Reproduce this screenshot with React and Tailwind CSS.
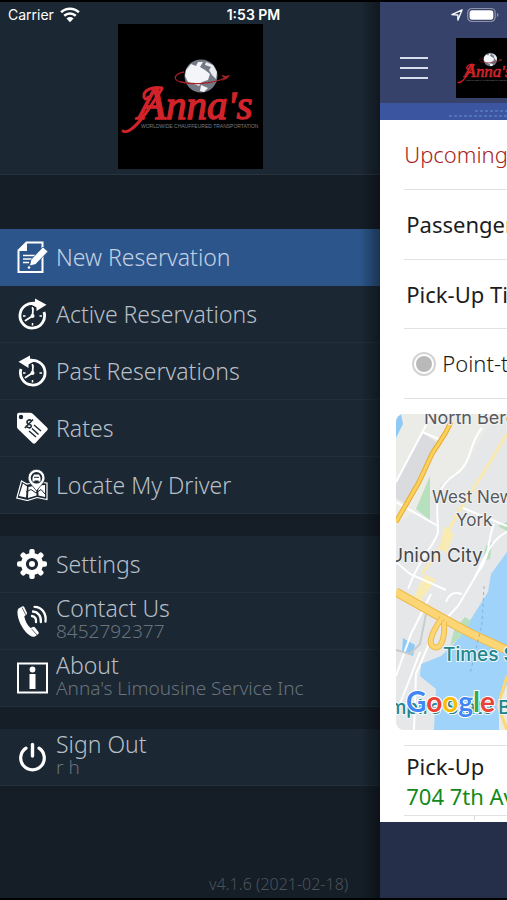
import React from "react";

function NewReservationIcon() {
  return (
    <svg viewBox="0 0 32 32" className="size-8 shrink-0" aria-hidden="true">
      <path d="M10.5 1.5H26.5V31H2.500V9.500Z" fill="none" stroke="#fff" strokeWidth="2" />
      <path d="M2 10L11 1V10Z" fill="#fff" />
      <path d="M7 14.500H19M7 18H16M7 21.500H13" stroke="#fff" strokeWidth="1.500" />
      <path d="M27 6L32 10.500L19.500 23.500L13.500 25L15 18.500Z" fill="#fff" stroke="#2c568b" strokeWidth="0.800" />
      <circle cx="13" cy="26.500" r="1.300" fill="#fff" />
    </svg>
  );
}

function ClockFace() {
  return (
    <>
      <path d="M16.500 9V11.500M16.500 25V27.500M7 18H9.500M23.500 18H26" stroke="#fff" strokeWidth="1.500" />
      <path d="M17 11L16.500 18L9.500 22.500" fill="none" stroke="#fff" strokeWidth="1.800" strokeLinecap="round" />
      <circle cx="16.500" cy="18" r="2" fill="#fff" />
    </>
  );
}

function ActiveIcon() {
  return (
    <svg viewBox="0 0 32 32" className="size-8 shrink-0" aria-hidden="true">
      <path d="M20 6A12.300 12.300 0 1 0 28 14" fill="none" stroke="#fff" strokeWidth="2.800" />
      <path d="M11 6.500C14 4.200 16.500 3.800 19 3.800V0.500L30.500 6.800L20.500 13V9.500C17 7 14 6.500 11 6.500Z" fill="#fff" />
      <ClockFace />
    </svg>
  );
}

function PastIcon() {
  return (
    <svg viewBox="0 0 32 32" className="size-8 shrink-0" aria-hidden="true">
      <path d="M13 6A12.300 12.300 0 1 1 5 14" fill="none" stroke="#fff" strokeWidth="2.800" />
      <path d="M22 6.500C19 4.200 16.500 3.800 14 3.800V0.500L2.500 6.800L12.500 13V9.500C16 7 19 6.500 22 6.500Z" fill="#fff" />
      <ClockFace />
    </svg>
  );
}

function RatesIcon() {
  return (
    <svg viewBox="0 0 32 32" className="size-8 shrink-0" aria-hidden="true">
      <path d="M3 0.800H14Q15.500 0.800 17 2L31 15.500Q32.500 17 31 18.500L19.500 31Q18 32.500 16.500 31L2 17Q1 16 1 14.500V3Q1 0.800 3 0.800Z" fill="#fff" />
      <circle cx="5" cy="5" r="2.200" fill="#1b2733" />
      <path d="M15.500 9C13 6.500 10 9 11.500 11.500C13 13 15 12 15.300 14C15 17 11 16 10 13.500M17 7.500L8.800 16" fill="none" stroke="#1b2733" strokeWidth="1.600" />
      <path d="M18 13L25 19M16 16.500L22.500 22.500M13 19L20 25" stroke="#1b2733" strokeWidth="1.400" />
    </svg>
  );
}

function LocateIcon() {
  return (
    <svg viewBox="0 0 32 32" className="size-8 shrink-0" aria-hidden="true">
      <path d="M5.500 12L11 15L20 13L31 14V30.500L21 28.500L11.500 31.500L0.800 29Z" fill="none" stroke="#fff" strokeWidth="1.200" />
      <path d="M7 14.500L11 17.500L10 28.500L3 27Z" fill="#fff" />
      <path d="M12.500 18L20 16.500L20.500 26.500L12 29Z" fill="#fff" />
      <path d="M22 16.500L29 16V28L22.500 26.500Z" fill="#fff" />
      <path d="M10 23L15 20.500L20 24L25 20.500L29 25" fill="none" stroke="#1b2733" strokeWidth="1" />
      <path d="M20.500 22C18 18 12 14 12 8.800A8.500 8.500 0 0 1 29 8.800C29 14 23 18 20.500 22Z" fill="#fff" stroke="#1b2733" strokeWidth="0.800" />
      <circle cx="20.500" cy="8.800" r="5.800" fill="#1b2733" />
      <path d="M16.500 12.500V8.500L18 5.500H23L24.500 8.500V12.500H22.500V11.500H18.500V12.500Z" fill="#fff" />
      <path d="M18 8.300H23" stroke="#1b2733" strokeWidth="1" />
    </svg>
  );
}

const TEETH = [0, 45, 90, 135, 180, 225, 270, 315];

function SettingsIcon() {
  return (
    <svg viewBox="0 0 32 32" className="size-8 shrink-0" aria-hidden="true">
      {TEETH.map((angle) => (
        <rect key={angle} x="13.300" y="1" width="5.400" height="8" rx="2" fill="#fff" transform={`rotate(${angle} 16 16)`} />
      ))}
      <circle cx="16" cy="16" r="8.600" fill="none" stroke="#fff" strokeWidth="5" />
      <circle cx="16" cy="16" r="3" fill="#fff" />
    </svg>
  );
}

function PhoneIcon() {
  return (
    <svg viewBox="0 0 32 32" className="size-8 shrink-0" aria-hidden="true">
      <path d="M2.500 3.500L6.500 1.200Q8 1 8.500 2.500L11 8Q11.200 9.300 10 10L8.300 11.200C9 16 11.500 20.500 14.500 23L17 22Q18 21.500 19 22.500L22.500 27Q23.200 28.300 22 29.300L19 31.500C14 33 8 26 4.500 19C1.500 12.500 0.500 6 2.500 3.500Z" fill="#fff" />
      <path d="M6 2.500L9.800 9.800M15.500 23.800L21 30" stroke="#1b2733" strokeWidth="0.700" />
      <path d="M16 11C18.500 11.500 20.500 13.500 20 17M17 6.500C22 7 25.500 11 24.800 17M18.500 1.800C26 2 30.500 8.500 29.500 16.500" fill="none" stroke="#fff" strokeWidth="2.300" strokeLinecap="round" />
    </svg>
  );
}

function AboutIcon() {
  return (
    <svg viewBox="0 0 32 32" className="size-8 shrink-0" aria-hidden="true">
      <rect x="2" y="1.500" width="29" height="29" fill="none" stroke="#fff" strokeWidth="2" />
      <circle cx="16.500" cy="7.500" r="2.900" fill="#fff" />
      <path d="M13.500 12H19.500V27H13.500Z" fill="#fff" />
    </svg>
  );
}

function PowerIcon() {
  return (
    <svg viewBox="0 0 32 32" className="size-8 shrink-0" aria-hidden="true">
      <path d="M10 7.200A11.800 11.800 0 1 0 23 7.200" fill="none" stroke="#fff" strokeWidth="3.200" strokeLinecap="round" />
      <path d="M16.500 3.500V15" stroke="#fff" strokeWidth="3.400" strokeLinecap="round" />
    </svg>
  );
}

function AnnasLogo({ className }) {
  return (
    <svg viewBox="0 0 145 145" className={className} role="img" aria-label="Anna's">
      <rect width="145" height="145" fill="#000" />
      <circle cx="83" cy="52" r="16.500" fill="#747986" />
      <path d="M68 46L73 40L78 42L80 38L85 38L82 43L87 46L92 50L90 56L84 58L81 62L76 60L70 58L67 52Z" fill="#f4f5f8" />
      <path d="M88 38L95 41L99 48L98 55L94 51L91 46L93 43L87 41Z" fill="#e9ebf0" />
      <path d="M83 61L90 64L86 68L82 67Z" fill="#f4f5f8" />
      <path d="M66 48C56 50 54 56 63 58C75 61 94 60 107 54" fill="none" stroke="#a52024" strokeWidth="1.300" />
      <path d="M103 51L108 52L112 51L110 54L104 57L106 54Z" fill="#a52024" />
      <text x="20" y="95" fill="#d2232a" stroke="#d2232a" strokeWidth="1.400" fontFamily="'Liberation Serif', serif" fontStyle="italic" fontSize="41">
        <tspan fontSize="46">A</tspan>nna's
      </text>
      <path d="M44 64C35 62 25 66 26 73C27 76 30 75 30 73M44 65C34 80 22 100 12 106C9 108 6 108 5 107" fill="none" stroke="#d2232a" strokeWidth="3" strokeLinecap="round" />
      <text x="23" y="104" fill="#777a80" fontFamily="'Liberation Sans', sans-serif" fontSize="5">
        WORLDWIDE CHAUFFEURED TRANSPORTATION
      </text>
    </svg>
  );
}

function StatusBar() {
  return (
    <div className="pointer-events-none absolute inset-x-0 top-0 z-20 grid h-7 grid-cols-3 items-center border-t-2 border-black px-2 font-['Inter','Liberation_Sans',sans-serif] text-sm text-white">
      <div className="flex items-center gap-1.5">
        <span>Carrier</span>
        <svg viewBox="0 0 18 14" className="h-4 w-5" aria-label="Wi-Fi">
          <path d="M1 4.500C5.500 0.300 12.500 0.300 17 4.500M3.800 7.700C6.800 4.900 11.200 4.900 14.200 7.700" fill="none" stroke="#fff" strokeWidth="2.300" />
          <path d="M9 13.500L5.800 10.200Q9 7.600 12.200 10.200Z" fill="#fff" />
        </svg>
      </div>
      <span className="text-center font-semibold">1:53 PM</span>
      <div className="flex items-center justify-end gap-1">
        <svg viewBox="0 0 14 14" className="size-3" aria-label="Location">
          <path d="M1 6.500L13 1L8 13V7Z" fill="none" stroke="#fff" strokeWidth="1.500" strokeLinejoin="round" />
        </svg>
        <svg viewBox="0 0 31 14" className="h-4 w-8" aria-label="Battery">
          <rect x="0.700" y="0.700" width="26.600" height="12.600" rx="4" fill="none" stroke="#8d93a8" strokeWidth="1.200" />
          <rect x="2.500" y="2.500" width="23" height="9" rx="2.500" fill="#fff" />
          <path d="M29 5V9Q30.500 8.500 30.500 7T29 5Z" fill="#8d93a8" />
        </svg>
      </div>
    </div>
  );
}

function MenuItem({ icon: Icon, title, detail, active }) {
  return (
    <li>
      <button
        type="button"
        className={`flex h-[57px] w-full items-center gap-2 border-b pl-4 text-left ${
          active ? "border-[#2c568b] bg-[#2c568b] text-[#c3d1e3]" : "border-[#22303b] bg-[#1b2733] text-[#b7bfc7]"
        }`}
      >
        <Icon />
        <span className={`flex flex-col whitespace-nowrap text-[23px] leading-6 font-light ${detail ? "pb-1" : ""}`}>
          <span>{title}</span>
          {detail && <span className="text-[19px] leading-[22px] text-[#67727c]">{detail}</span>}
        </span>
      </button>
    </li>
  );
}

function Sidebar() {
  return (
    <aside className="relative flex w-3/4 shrink-0 flex-col bg-[#151e27]">
      <div className="flex h-[175px] shrink-0 justify-center border-b border-[#26343f] bg-[#1b2733] pt-6">
        <AnnasLogo className="size-[145px]" />
      </div>
      <nav className="flex flex-col gap-[22px] pt-[54px]">
        <ul>
          <MenuItem icon={NewReservationIcon} title="New Reservation" active />
          <MenuItem icon={ActiveIcon} title="Active Reservations" />
          <MenuItem icon={PastIcon} title="Past Reservations" />
          <MenuItem icon={RatesIcon} title="Rates" />
          <MenuItem icon={LocateIcon} title="Locate My Driver" />
        </ul>
        <ul>
          <MenuItem icon={SettingsIcon} title="Settings" />
          <MenuItem icon={PhoneIcon} title="Contact Us" detail="8452792377" />
          <MenuItem icon={AboutIcon} title="About" detail="Anna's Limousine Service Inc" />
        </ul>
        <ul>
          <MenuItem icon={PowerIcon} title="Sign Out" detail="r h" />
        </ul>
      </nav>
      <p className="mt-auto pr-8 pb-0.5 text-right text-base leading-6 font-light text-[#4a535c]">v4.1.6 (2021-02-18)</p>
      <div className="pointer-events-none absolute inset-y-0 right-0 w-5 bg-linear-to-r from-transparent to-black/40" />
    </aside>
  );
}

function RouteMap() {
  return (
    <svg
      viewBox="0 0 111 316"
      preserveAspectRatio="xMinYMin slice"
      className="ml-4 h-[316px] rounded-l-lg font-['Inter','Liberation_Sans',sans-serif]"
      role="img"
      aria-label="Map"
    >
      <rect width="111" height="316" fill="#e6e7e8" />
      <path d="M0 0H100L70 50L45 70L30 90L0 110Z" fill="#ebebe8" />
      <path d="M26 18L43 30L12 92L0 84V70Z" fill="#d9dbde" />
      <path d="M0 0H5L7 10L0 24Z" fill="#8fcaf6" />
      <path d="M34 62L34 106L20 95Z" fill="#b7e0bd" />
      <path d="M111 138L95 160L92 178L75 205L58 230L45 242L25 250L24 262L40 275L38 316H104L111 270Z" fill="#9fd3fa" />
      <path d="M111 270L103 290V316H111Z" fill="#eeeae0" />
      <path d="M7 224L19 231L17 242L6 238Z" fill="#8fcaf6" />
      <path d="M69 203L58 216L54 232L64 224L75 207Z" fill="#b7dfbe" />
      <path d="M90 132L96 128L94 145L86 148Z" fill="#b7dfbe" />
      <path d="M111 108L102 112L111 117Z" fill="#b7dfbe" />
      <path d="M48 112L58 120L50 140L44 132ZM29 160L40 166L22 190L18 182Z" fill="#f9ebb4" />
      <g fill="none" stroke="#fff" strokeWidth="2">
        <path d="M36 0L0 68M26 18L45 26M0 88L42 112M86 14C72 30 77 48 60 60C35 76 42 96 42 118C40 130 25 140 12 175" />
        <path d="M67 94L111 112M98 110C90 130 96 140 81 160L62 192L38 218L20 260L18 316" />
        <path d="M111 118C95 125 88 145 78 165M0 148L14 160L50 176M35 180L15 220L0 262" />
        <path d="M50 188Q54 176 66 180M24 238Q8 280 0 300" />
      </g>
      <path d="M111 20L88 58L61 100L44 134L26 160" fill="none" stroke="#faeab0" strokeWidth="3" />
      <path d="M0 236L14 240L24 230L30 200" fill="none" stroke="#c9cccf" strokeWidth="2" />
      <path d="M55 8C48 24 43 28 36 40L23 68L0 108" fill="none" stroke="#e5ad32" strokeWidth="5" />
      <path d="M55 8C48 24 43 28 36 40L23 68L0 108" fill="none" stroke="#fbd05d" strokeWidth="3" />
      <path d="M0 178L48 205L76 220L111 236" fill="none" stroke="#edbb4b" strokeWidth="9" />
      <path d="M0 178L48 205L76 220L111 236" fill="none" stroke="#fcd675" strokeWidth="7" />
      <path d="M46 204C36 218 31 230 38 233C46 236 49 222 48 208" fill="none" stroke="#edbb4b" strokeWidth="6" />
      <path d="M46 204C36 218 31 230 38 233C46 236 49 222 48 208" fill="none" stroke="#fcd675" strokeWidth="4" />
      <path d="M111 262L102 292L111 316" fill="none" stroke="#fbd876" strokeWidth="3" />
      <path d="M88 172L86 210L74 260" fill="none" stroke="#7fa9ca" strokeWidth="0.800" strokeDasharray="3 3" />
      <g fill="#57595c" stroke="#f2f2f2" strokeWidth="2" paintOrder="stroke" fontSize="18">
        <text x="28" y="10">North Bergen</text>
        <text x="36" y="89" fontSize="17">West New</text>
        <text x="60" y="112" fontSize="17">York</text>
        <text x="-7" y="148" fontSize="19" fill="#46484b">Union City</text>
      </g>
      <g fill="#23848a" stroke="#eef7fb" strokeWidth="2" paintOrder="stroke" fontSize="19" fontWeight="500">
        <text x="47" y="247">Times Square</text>
        <text x="-18" y="300">Empire State Building</text>
      </g>
      <text x="10" y="298" fontFamily="Lato, sans-serif" fontWeight="700" fontSize="28" stroke="#fff" strokeWidth="2" paintOrder="stroke">
        <tspan fill="#4285f4">G</tspan>
        <tspan fill="#ea4335">o</tspan>
        <tspan fill="#fbbc05">o</tspan>
        <tspan fill="#4285f4">g</tspan>
        <tspan fill="#34a853">l</tspan>
        <tspan fill="#ea4335">e</tspan>
      </text>
    </svg>
  );
}

function ReservationPanel() {
  return (
    <main className="flex min-w-0 flex-1 flex-col overflow-hidden bg-[#262f49] whitespace-nowrap">
      <header className="flex h-[103px] shrink-0 items-start gap-7 bg-[#36426a] pt-[38px] pl-5">
        <button type="button" aria-label="Menu" className="flex h-[60px] w-7 shrink-0 flex-col justify-center gap-2">
          <span className="h-[2px] w-full bg-[#d9dcec]" />
          <span className="h-[2px] w-full bg-[#d9dcec]" />
          <span className="h-[2px] w-full bg-[#d9dcec]" />
        </button>
        <AnnasLogo className="size-[60px] shrink-0" />
      </header>
      <div className="flex h-[17px] shrink-0 justify-end bg-[#3b55a1]">
        <svg viewBox="0 0 60 17" className="h-[17px] w-[60px]" aria-hidden="true">
          <path d="M28 8H60M2 13H60" stroke="#4f72b8" strokeWidth="2" strokeDasharray="3 2" />
        </svg>
      </div>
      <div className="flex flex-col bg-white text-[22px] text-[#1c1c1c]">
        <div className="ml-6">
          <h1 className="flex h-[70px] items-center border-b border-[#e2e2e2] font-light text-[#a81e22]">Upcoming</h1>
          <div className="flex h-[70px] items-center border-b border-[#e2e2e2] pl-0.5">Passenger</div>
          <div className="flex h-[69px] items-center border-b border-[#e2e2e2] pl-0.5">Pick-Up Time</div>
          <label className="flex h-[70px] items-center gap-1.5 border-b border-[#e2e2e2] pl-2 font-light text-[#1c1c1c]">
            <input
              type="radio"
              name="trip-type"
              defaultChecked
              className="size-6 shrink-0 appearance-none rounded-full border-2 border-[#d3d3d3] bg-[#b9b9b9] bg-clip-content p-0.5"
            />
            Point-to-Point
          </label>
        </div>
        <div className="flex overflow-hidden pt-[15px] pb-[15px]">
          <RouteMap />
        </div>
        <div className="ml-6 border-t border-[#e2e2e2]">
          <div className="flex h-[70px] flex-col justify-center border-b border-[#e2e2e2] pl-0.5 leading-[30px]">
            <span>Pick-Up</span>
            <span className="text-[#12891a]">704 7th Ave</span>
          </div>
          <div className="flex h-[6px]">
            <span className="ml-[70px] h-1 w-px bg-[#dcdcdc]" />
          </div>
        </div>
      </div>
    </main>
  );
}

export default function App() {
  return (
    <div className="relative flex min-h-screen overflow-hidden border-b-2 border-black bg-[#151e27] font-['Noto_Sans','Open_Sans',sans-serif]">
      <StatusBar />
      <Sidebar />
      <ReservationPanel />
    </div>
  );
}
